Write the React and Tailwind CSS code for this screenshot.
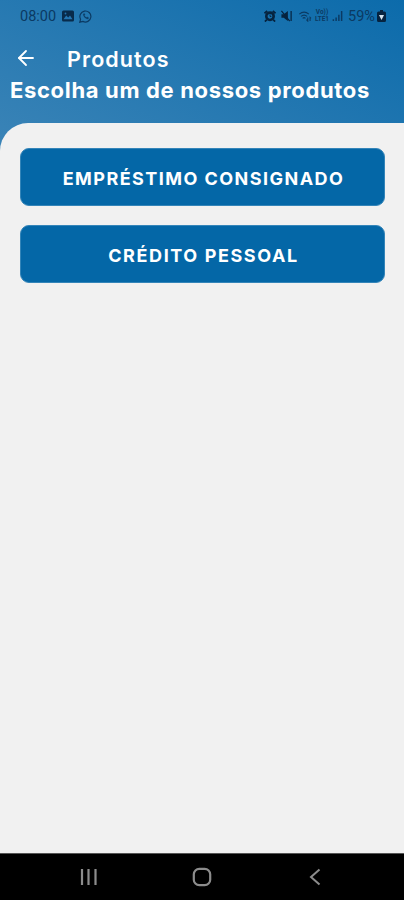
import { ArrowLeft } from 'lucide-react';

const PRODUCTS = [
  { label: 'EMPRÉSTIMO CONSIGNADO', spacing: 'tracking-[1.45px]' },
  { label: 'CRÉDITO PESSOAL', spacing: 'tracking-[1.6px]' },
];

function StatusBar() {
  return (
    <div className="flex h-8 items-center pl-5 pr-[18px] text-[#0b3a63]">
      <span className="w-[37px] whitespace-nowrap pt-0.5 font-['Roboto',sans-serif] text-[14.5px] leading-none">08:00</span>
      {/* gallery */}
      <svg className="ml-[5px] h-3 w-3 text-[#082b4b]" viewBox="0 0 12 12">
        <rect y="0.5" width="12" height="11" rx="1.5" fill="currentColor" />
        <path d="M1.500 9.200l2.700-3.700 2 2L8 5.500l2.500 3.700z" fill="#2374b0" />
        <circle cx="3.500" cy="3.500" r="0.900" fill="#2374b0" />
      </svg>
      {/* whatsapp */}
      <svg className="ml-[5px] h-[13px] w-[13px]" viewBox="0 0 13 13" fill="none" stroke="currentColor">
        <path d="M.8 12.200l.8-3a5.500 5.500 0 1 1 2.300 2.200z" strokeWidth="1.200" />
        <path d="M4.300 4c0 2.500 2.200 4.900 4.800 5l.5-1.300-1.500-.8-.8.7C6.400 7.200 5.700 6.500 5.300 5.600l.7-.8-.7-1.300z" fill="currentColor" strokeWidth="0.300" />
      </svg>

      <div className="ml-auto flex items-center">
        {/* alarm */}
        <svg className="h-3 w-3 text-[#06233f]" viewBox="0 0 13 13" fill="none" stroke="currentColor">
          <path d="M.5 3.500l3-2.500M12.500 3.500L9.500 1M3 10.500L1 12.500M10 10.500l2 2" strokeWidth="2" />
          <circle cx="6.500" cy="6.800" r="4" strokeWidth="2.800" />
          <path d="M6.500 5v2h1.500" />
        </svg>
        {/* muted speaker */}
        <svg className="ml-1 h-3 w-[13px] text-[#06233f]" viewBox="0 0 13 13">
          <path d="M1 4.500h2.500L8 1v11L3.500 8.500H1z" fill="currentColor" />
          <path d="M1 1l9 11M11.500 1v11" fill="none" stroke="currentColor" strokeWidth="1.300" />
        </svg>
        {/* wifi */}
        <svg className="ml-[5px] h-3 w-[14px]" viewBox="0 0 14 13" fill="none" stroke="currentColor" strokeWidth="1.200">
          <path d="M.8 4.500Q6 0 11.200 4.500M2.700 7Q6 4 9.300 7M4.500 9Q6 7.500 7.500 9M10 8v4l-1.500-1.500M12.500 12V8l1 1" />
        </svg>
        <span className="ml-0.5 flex w-4 flex-col items-center font-['Roboto',sans-serif] text-[6.5px] font-bold leading-[7px]">
          <span>Vo))</span>
          <span>LTE1</span>
        </span>
        {/* signal */}
        <svg className="ml-0.5 h-3 w-[11px]" viewBox="0 0 12 13" fill="none" stroke="currentColor" strokeWidth="1.600">
          <path d="M1.500 12V10M4.500 12V8M7.500 12V5M10.500 12V1" />
        </svg>
        <span className="ml-[5px] w-[29px] whitespace-nowrap pt-0.5 font-['Roboto',sans-serif] text-[14.5px] leading-none">59%</span>
        {/* battery */}
        <svg className="h-3 w-[9px] text-[#06233f]" viewBox="0 0 9 12">
          <path d="M3 0h3v1.500h1.500Q9 1.500 9 3v7.500Q9 12 7.500 12h-6Q0 12 0 10.500V3q0-1.500 1.500-1.500H3z" fill="currentColor" />
          <path d="M2 5h5L4.500 10z" fill="#d5e4ef" />
        </svg>
      </div>
    </div>
  );
}

function NavBar() {
  return (
    <nav className="flex h-[47px] items-center border-t border-[#555] bg-black text-[#8c8c8c]">
      <svg className="ml-[80px] h-[18px] w-[18px]" viewBox="0 0 18 18" fill="none" stroke="currentColor" strokeWidth="2.200">
        <path d="M2 1v16M8.500 1v16M15.500 1v16" />
      </svg>
      <svg className="ml-[94px] h-5 w-5" viewBox="0 0 20 20" fill="none" stroke="currentColor" strokeWidth="2.200">
        <rect x="1.800" y="1.800" width="16.400" height="16.400" rx="5.500" />
      </svg>
      <svg className="ml-[97px] h-[18px] w-3" viewBox="0 0 12 18" fill="none" stroke="currentColor" strokeWidth="2">
        <path d="M10.500 1.500L2 9l8.500 7.500" />
      </svg>
    </nav>
  );
}

export default function App() {
  return (
    <div className="flex h-[900px] w-[404px] flex-col overflow-hidden bg-[linear-gradient(25deg,#3b84b7_0px,#0467a9_360px)] bg-[length:404px_153px] bg-no-repeat font-['Inter',sans-serif]">
      <StatusBar />

      <header className="h-[91px] text-white">
        <div className="flex h-[54px] items-center pl-[14px]">
          <ArrowLeft className="-mt-0.5 h-6 w-6" strokeWidth={1.8} />
          <h1 className="ml-[29px] whitespace-nowrap pt-0.5 text-[21.5px] font-semibold leading-none tracking-[1.1px]">Produtos</h1>
        </div>
        <h2 className="-mt-2 whitespace-nowrap pl-2.5 text-[22px] font-bold leading-6 tracking-[0.66px]">
          Escolha um de nossos produtos
        </h2>
      </header>

      <main className="flex flex-1 flex-col gap-[19px] rounded-tl-[28px] bg-[#f1f1f1] pl-5 pr-[19px] pt-[25px]">
        {PRODUCTS.map(({ label, spacing }) => (
          <button
            key={label}
            className={`h-[58px] rounded-[9px] border border-[#3485b9] bg-[#0467a7] pl-0.5 pt-[3px] text-[18px] font-bold leading-none text-white ${spacing}`}
          >
            {label}
          </button>
        ))}
      </main>

      <NavBar />
    </div>
  );
}
